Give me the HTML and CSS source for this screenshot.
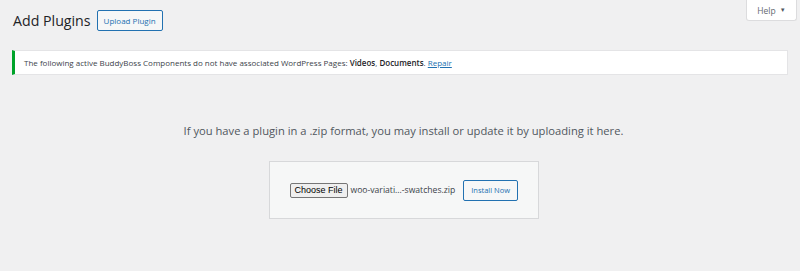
FILE: index.html
```html
<!DOCTYPE html>
<html>
<head>
<meta charset="utf-8">
<link rel="stylesheet" href="styles.css">
</head>
<body>
<div class="help-bar">
  <button class="help-tab">Help <span class="caret">▼</span></button>
</div>
<div class="wrap">
  <div class="heading">
    <h1>Add Plugins</h1>
    <a class="page-action">Upload Plugin</a>
  </div>
  <div class="notice">
    <p>The following active BuddyBoss Components do not have associated WordPress Pages: <strong>Videos</strong>, <strong>Documents</strong>. <a class="link">Repair</a></p>
  </div>
  <div class="upload">
    <p class="install-help">If you have a plugin in a .zip format, you may install or update it by uploading it here.</p>
    <div class="upload-box">
      <span class="file-btn">Choose File</span>
      <span class="file-name">woo-variati...-swatches.zip</span>
      <span class="install-btn">Install Now</span>
    </div>
  </div>
</div>
</body>
</html>
```
FILE: styles.css
```css
html, body {
  margin: 0;
  padding: 0;
  background: #f0f0f1;
  font-family: "Open Sans", "Noto Sans", sans-serif;
  color: #3c434a;
}
.help-bar {
  position: absolute;
  top: 0;
  right: 3px;
}
.help-tab {
  display: flex;
  align-items: center;
  gap: 4px;
  width: 51px;
  height: 21px;
  justify-content: center;
  background: #fff;
  border: 1px solid #dcdcde;
  border-top: none;
  border-radius: 0 0 3px 3px;
  font-family: inherit;
  font-size: 8.5px;
  color: #646970;
  padding: 0;
}
.caret {
  font-size: 6px;
  color: #50575e;
}
.wrap {
  padding: 0 12px;
}
.heading {
  display: flex;
  align-items: center;
  gap: 6px;
  height: 40px;
  padding-left: 1px;
}
h1 {
  margin: 0;
  font-size: 14.2px;
  font-weight: 400;
  color: #1d2327;
}
.page-action {
  display: inline-flex;
  align-items: center;
  height: 19px;
  padding: 0 6px;
  border: 1px solid #2271b1;
  border-radius: 2px;
  background: #f6f7f7;
  color: #2271b1;
  font-size: 8px;
}
.notice {
  margin-top: 10px;
  background: #fff;
  border: 1px solid #e4e4e6;
  border-left: 3px solid #00a32a;
  height: 23px;
  display: flex;
  align-items: center;
  padding-left: 9px;
}
.notice p {
  margin: 0;
  font-size: 8px;
  color: #3c434a;
}
.notice strong {
  font-weight: 600;
  color: #1d2327;
}
.link {
  color: #2271b1;
  text-decoration: underline;
}
.upload {
  display: flex;
  flex-direction: column;
  align-items: center;
  padding-top: 48px;
  padding-left: 7px;
}
.install-help {
  margin: 0;
  font-size: 11.2px;
  color: #50575e;
}
.upload-box {
  margin-top: 23px;
  background: #f6f7f7;
  border: 1px solid #d7d8da;
  display: flex;
  align-items: center;
  padding-left: 20px;
  box-sizing: border-box;
  width: 270px;
  height: 58px;
}
.file-btn {
  font-family: "Liberation Sans", Arial, sans-serif;
  font-size: 9px;
  color: #000;
  background: #efefef;
  border: 1px solid #767676;
  border-radius: 2px;
  padding: 1px 4px;
  line-height: 11px;
}
.file-name {
  font-size: 8.6px;
  color: #3c434a;
  margin-left: 3px;
}
.install-btn {
  margin-left: 8px;
  display: inline-flex;
  align-items: center;
  height: 19px;
  padding: 0 7px;
  border: 1px solid #2271b1;
  border-radius: 2px;
  background: #f6f7f7;
  color: #2271b1;
  font-size: 7.5px;
}
```
